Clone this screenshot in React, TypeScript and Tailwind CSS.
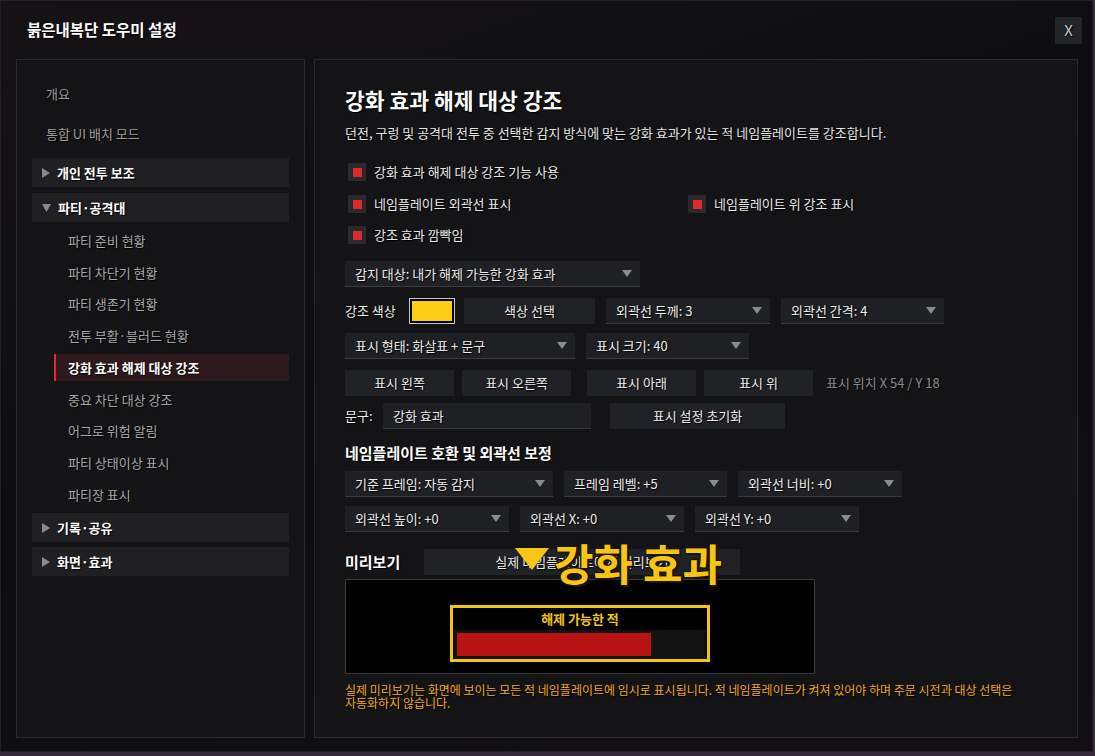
import type { ReactNode } from "react";

const shadow = "[text-shadow:1px_1px_1px_#000]";

function Caret() {
  return (
    <svg width="10" height="7" viewBox="0 0 10 7" className="shrink-0">
      <polygon points="0,0 10,0 5,7" fill="#8c8c90" />
    </svg>
  );
}

function GroupArrow({ open }: { open?: boolean }) {
  return open ? (
    <svg width="9" height="9" viewBox="0 0 9 9" className="shrink-0">
      <polygon points="0,1 9,1 4.5,9" fill="#8a8a8e" />
    </svg>
  ) : (
    <svg width="8" height="10" viewBox="0 0 8 10" className="shrink-0">
      <polygon points="0,0 8,5 0,10" fill="#8a8a8e" />
    </svg>
  );
}

function Check({ label }: { label: string }) {
  return (
    <div className="flex h-[18px] items-center gap-[8px] pl-[3px]">
      <span className="flex h-[18px] w-[18px] items-center justify-center bg-[#2a2a2e]">
        <span className="h-[9px] w-[9px] bg-[#dc2a2f]" />
      </span>
      <span className={`text-[13px] text-[#e8e8e8] ${shadow}`}>{label}</span>
    </div>
  );
}

function Select({ label, className }: { label: string; className: string }) {
  return (
    <div
      className={`flex h-[26px] items-center justify-between border-b border-[#3a3b3f] bg-[#1f2023] pl-[10px] pr-[8px] ${className}`}
    >
      <span className={`whitespace-nowrap text-[13px] text-[#ececec] ${shadow}`}>{label}</span>
      <Caret />
    </div>
  );
}

function Btn({ children, className }: { children: ReactNode; className: string }) {
  return (
    <div
      className={`flex h-[26px] items-center justify-center whitespace-nowrap bg-[#212225] text-[13px] text-[#ececec] ${shadow} ${className}`}
    >
      {children}
    </div>
  );
}

function Group({ label, open }: { label: string; open?: boolean }) {
  return (
    <div className="mx-[15px] flex h-[29px] items-center gap-[7px] bg-[#202023] pl-[10px]">
      <GroupArrow open={open} />
      <span className={`text-[13px] font-bold text-white ${shadow}`}>{label}</span>
    </div>
  );
}

const partyItems = [
  "파티 준비 현황",
  "파티 차단기 현황",
  "파티 생존기 현황",
  "전투 부활·블러드 현황",
  "강화 효과 해제 대상 강조",
  "중요 차단 대상 강조",
  "어그로 위험 알림",
  "파티 상태이상 표시",
  "파티장 표시",
];

function Sidebar() {
  return (
    <aside className="flex h-[679px] w-[289px] shrink-0 flex-col border border-[#2a2a2d] bg-[#141416] pt-[14px]">
      <div className={`flex h-[40px] items-center pl-[29px] text-[13px] text-[#9c9c9c] ${shadow}`}>개요</div>
      <div className={`flex h-[40px] items-center pl-[29px] text-[13px] text-[#9c9c9c] ${shadow}`}>
        통합 UI 배치 모드
      </div>
      <div className="mt-[4px] flex flex-col gap-[6px]">
        <Group label="개인 전투 보조" />
        <Group label="파티·공격대" open />
      </div>
      <div className="ml-[37px] mr-[15px] mt-[3px] flex flex-col">
        {partyItems.map((item, i) => {
          const active = i === 4;
          return (
            <div key={item} className="flex h-[31.7px] items-center">
              <div
                className={
                  active
                    ? `flex h-[27px] w-full items-center border-l-2 border-[#e0283a] bg-[#2e1a1d] pl-[12px] text-[13px] font-bold text-white ${shadow}`
                    : `flex h-[27px] w-full items-center border-l-2 border-transparent pl-[12px] text-[13px] text-[#a6a6a6] ${shadow}`
                }
              >
                {item}
              </div>
            </div>
          );
        })}
      </div>
      <div className="mt-[3px] flex flex-col gap-[5px]">
        <Group label="기록·공유" />
        <Group label="화면·효과" />
      </div>
    </aside>
  );
}

function Preview() {
  return (
    <>
      <div className="relative mt-[17px] flex h-[26px] items-center">
        <span className={`w-[79px] text-[15px] font-bold text-white ${shadow}`}>미리보기</span>
        <Btn className="w-[316px]">실제 네임플레이트에서 미리보기</Btn>
        {/* arrow + label drawn above the nameplate */}
        <div className="absolute left-[170px] top-[-10px] flex items-center gap-[5px]">
          <svg width="34" height="22" viewBox="0 0 34 22" className="mt-[-6px]">
            <polygon points="0,0 34,0 17,22" fill="#f7c516" />
          </svg>
          <span className="text-[43px] font-bold leading-[46px] text-[#f7c516] [text-shadow:2px_2px_0_#1a1400,-1px_-1px_0_#1a1400,1px_-1px_0_#1a1400,-1px_1px_0_#1a1400]">
            강화 효과
          </span>
        </div>
      </div>
      <div className="mt-[4px] flex h-[95px] w-[470px] justify-center border border-[#3a3a3c] bg-black pt-[25px]">
        <div className="flex h-[57px] w-[260px] flex-col border-[3px] border-[#f2c511]">
          <div className="flex h-[22px] items-center justify-center text-[13px] font-bold text-[#f2c511]">
            해제 가능한 적
          </div>
          <div className="mx-[1px] flex-1 bg-[#121212] px-[3px] py-[3px]">
            <div className="h-full w-[194px] bg-[#b91212]" />
          </div>
        </div>
      </div>
    </>
  );
}

function Content() {
  return (
    <section className="flex h-[679px] flex-1 flex-col border border-[#2a2a2d] bg-[#141416] pl-[30px] pt-[26px]">
      <h1 className={`h-[28px] text-[21.5px] font-bold leading-[28px] text-white ${shadow}`}>
        강화 효과 해제 대상 강조
      </h1>
      <p className={`mt-[10px] h-[18px] whitespace-nowrap text-[13px] leading-[18px] text-[#e4e4e4] ${shadow}`}>
        던전, 구렁 및 공격대 전투 중 선택한 감지 방식에 맞는 강화 효과가 있는 적 네임플레이트를 강조합니다.
      </p>

      <div className="mt-[21px]">
        <Check label="강화 효과 해제 대상 강조 기능 사용" />
      </div>
      <div className="mt-[14px] flex">
        <div className="w-[340px]">
          <Check label="네임플레이트 외곽선 표시" />
        </div>
        <Check label="네임플레이트 위 강조 표시" />
      </div>
      <div className="mt-[13px]">
        <Check label="강조 효과 깜빡임" />
      </div>

      <Select label="감지 대상: 내가 해제 가능한 강화 효과" className="mt-[17px] w-[295px]" />

      <div className="mt-[11px] flex items-center">
        <span className={`w-[64px] text-[13px] text-[#ececec] ${shadow}`}>강조 색상</span>
        <div className="h-[26px] w-[46px] border border-[#c4c4c4] bg-black p-[2px]">
          <div className="h-full w-full bg-[#fbcf16]" />
        </div>
        <Btn className="ml-[9px] w-[131px]">색상 선택</Btn>
        <Select label="외곽선 두께: 3" className="ml-[11px] w-[164px]" />
        <Select label="외곽선 간격: 4" className="ml-[11px] w-[163px]" />
      </div>

      <div className="mt-[9px] flex">
        <Select label="표시 형태: 화살표 + 문구" className="w-[230px]" />
        <Select label="표시 크기: 40" className="ml-[11px] w-[163px]" />
      </div>

      <div className="mt-[11px] flex items-center">
        <Btn className="w-[109px]">표시 왼쪽</Btn>
        <Btn className="ml-[8px] w-[109px]">표시 오른쪽</Btn>
        <Btn className="ml-[16px] w-[109px]">표시 아래</Btn>
        <Btn className="ml-[8px] w-[109px]">표시 위</Btn>
        <span className={`ml-[13px] text-[13px] text-[#8a8a8c] ${shadow}`}>표시 위치 X 54 / Y 18</span>
      </div>

      <div className="mt-[7px] flex items-center">
        <span className={`w-[38px] text-[13px] text-[#ececec] ${shadow}`}>문구:</span>
        <div
          className={`flex h-[26px] w-[208px] items-center border-b border-[#3a3b3f] bg-[#1f2023] pl-[10px] text-[13px] text-[#ececec] ${shadow}`}
        >
          강화 효과
        </div>
        <Btn className="ml-[19px] w-[175px]">표시 설정 초기화</Btn>
      </div>

      <h2 className={`mt-[14px] h-[20px] text-[15px] font-bold leading-[20px] text-white ${shadow}`}>
        네임플레이트 호환 및 외곽선 보정
      </h2>
      <div className="mt-[8px] flex gap-[11px]">
        <Select label="기준 프레임: 자동 감지" className="w-[208px]" />
        <Select label="프레임 레벨: +5" className="w-[163px]" />
        <Select label="외곽선 너비: +0" className="w-[164px]" />
      </div>
      <div className="mt-[9px] flex gap-[11px]">
        <Select label="외곽선 높이: +0" className="w-[164px]" />
        <Select label="외곽선 X: +0" className="w-[164px]" />
        <Select label="외곽선 Y: +0" className="w-[164px]" />
      </div>

      <Preview />

      <p className={`mt-[9px] whitespace-nowrap text-[12px] leading-[13px] text-[#f0aa1e] ${shadow}`}>
        실제 미리보기는 화면에 보이는 모든 적 네임플레이트에 임시로 표시됩니다. 적 네임플레이트가 켜져 있어야 하며 주문
        시전과 대상 선택은
        <br />
        자동화하지 않습니다.
      </p>
    </section>
  );
}

export default function App() {
  return (
    <div className="h-[756px] w-[1095px] overflow-hidden bg-[#35293a] font-['Noto_Sans_CJK_KR','Noto_Sans',sans-serif]">
      <div className="flex h-[752px] w-[1093px] flex-col border border-[#222024] bg-[linear-gradient(160deg,#151315_0%,#0d0c0e_45%,#110f12_100%)]">
        <header className="flex h-[58px] items-center justify-between pl-[26px] pr-[10px]">
          <span className={`text-[15.5px] font-bold text-white ${shadow}`}>붉은내복단 도우미 설정</span>
          <div className={`flex h-[27px] w-[27px] items-center justify-center bg-[#232427] text-[15px] text-[#c4c4c4] ${shadow}`}>
            X
          </div>
        </header>
        <div className="flex gap-[9px] pl-[15px] pr-[14px]">
          <Sidebar />
          <Content />
        </div>
      </div>
    </div>
  );
}
